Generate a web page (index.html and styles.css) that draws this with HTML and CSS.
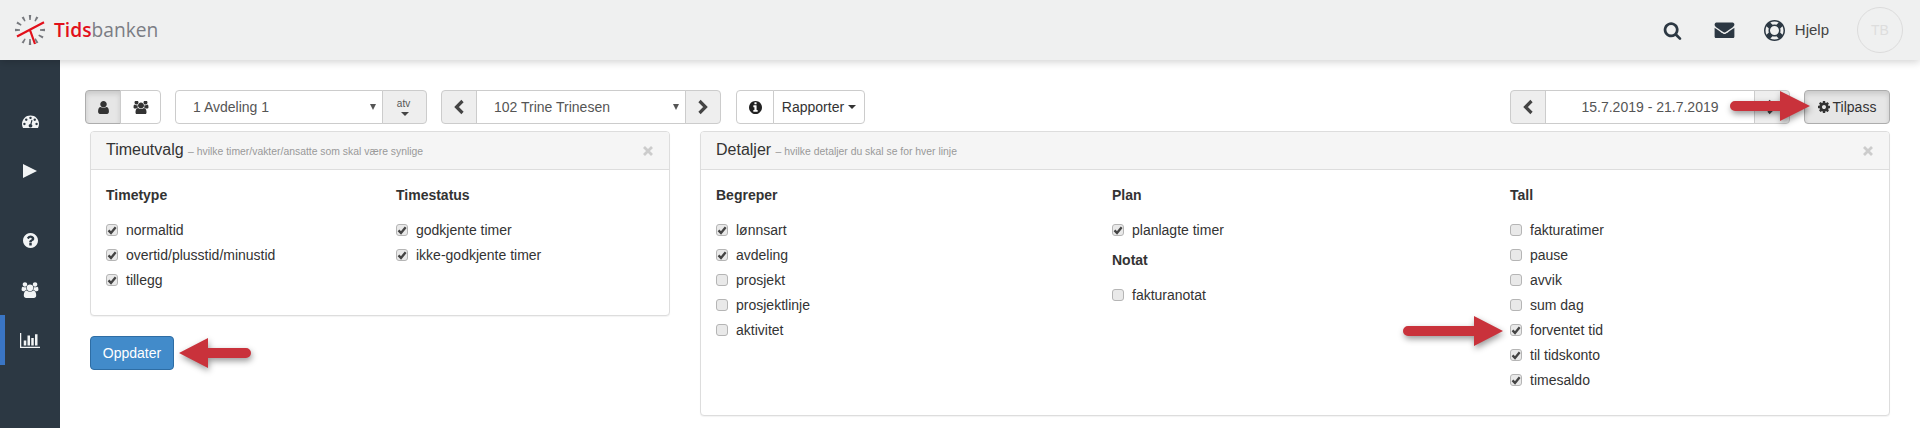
FILE: index.html
```html
<!DOCTYPE html>
<html lang="no">
<head>
<meta charset="utf-8">
<title>Tidsbanken</title>
<link rel="stylesheet" href="styles.css">
</head>
<body>
<svg class="sprite" width="0" height="0">
  <symbol id="i-search" viewBox="0 0 1792 1792"><path d="M1216 832q0-185-131.500-316.500t-316.500-131.500-316.500 131.500-131.500 316.500 131.500 316.500 316.500 131.500 316.500-131.500 131.500-316.500zm512 832q0 52-38 90t-90 38q-54 0-90-38l-343-342q-179 124-399 124-143 0-273.500-55.500t-225-150-150-225-55.500-273.500 55.500-273.500 150-225 225-150 273.500-55.500 273.500 55.500 225 150 150 225 55.500 273.500q0 220-124 399l343 343q37 37 37 90z"/></symbol>
  <symbol id="i-mail" viewBox="0 200 1792 1450"><path d="M1792 710v794q0 66-47 113t-113 47h-1472q-66 0-113-47t-47-113v-794q44 49 101 87 362 246 497 345 57 42 92.500 65.500t94.500 48 110 24.500h2q51 0 110-24.500t94.500-48 92.500-65.500q170-123 498-345 57-39 100-87zm0-294q0 79-49 151t-122 123q-376 261-468 325-10 7-42.500 30.500t-54 38-52 32.500-57.500 27-50 9h-2q-23 0-50-9t-57.500-27-52-32.500-54-38-42.500-30.500q-91-64-262-182.500t-205-142.500q-62-42-117-115.500t-55-136.500q0-78 41.500-130t118.500-52h1472q65 0 112.500 47t47.500 113z"/></symbol>
  <symbol id="i-ring" viewBox="0 0 1792 1792"><path d="M896 0q182 0 348 71t286 191 191 286 71 348-71 348-191 286-286 191-348 71-348-71-286-191-191-286-71-348 71-348 191-286 286-191 348-71zm0 128q-190 0-361 90l194 194q82-28 167-28t167 28l194-194q-171-90-361-90zm-678 1129l194-194q-28-82-28-167t28-167l-194-194q-90 171-90 361t90 361zm678 407q190 0 361-90l-194-194q-82 28-167 28t-167-28l-194 194q171 90 361 90zm0-384q159 0 271.500-112.500t112.500-271.500-112.500-271.500-271.500-112.500-271.500 112.500-112.500 271.500 112.500 271.500 271.500 112.500zm484-217l194 194q90-171 90-361t-90-361l-194 194q28 82 28 167t-28 167z"/></symbol>
  <symbol id="i-question" viewBox="128 128 1536 1536"><path d="M1024 1376v-192q0-14-9-23t-23-9h-192q-14 0-23 9t-9 23v192q0 14 9 23t23 9h192q14 0 23-9t9-23zm256-672q0-88-55.500-163t-138.500-116-170-41q-243 0-371 213-15 24 8 42l132 100q7 6 19 6 16 0 25-12 53-68 86-92 34-24 86-24 48 0 85.500 26t37.500 59q0 38-20 61t-68 45q-63 28-115.500 86.500t-52.500 125.500v36q0 14 9 23t23 9h192q14 0 23-9t9-23q0-19 21.500-49.500t54.500-49.500q32-18 49-28.500t46-35 44.500-48 28-60.500 12.500-81zm384 192q0 209-103 385.500t-279.500 279.500-385.500 103-385.500-103-279.500-279.500-103-385.500 103-385.500 279.500-279.500 385.500-103 385.500 103 279.500 279.500 103 385.500z"/></symbol>
  <symbol id="i-info" viewBox="128 128 1536 1536"><path d="M1152 1376v-160q0-14-9-23t-23-9h-96v-512q0-14-9-23t-23-9h-320q-14 0-23 9t-9 23v160q0 14 9 23t23 9h96v320h-96q-14 0-23 9t-9 23v160q0 14 9 23t23 9h448q14 0 23-9t9-23zm-128-896v-160q0-14-9-23t-23-9h-192q-14 0-23 9t-9 23v160q0 14 9 23t23 9h192q14 0 23-9t9-23zm640 416q0 209-103 385.500t-279.500 279.500-385.500 103-385.500-103-279.500-279.500-103-385.500 103-385.500 279.500-279.500 385.500-103 385.500 103 279.500 279.500 103 385.500z"/></symbol>
  <symbol id="i-cog" viewBox="128 128 1536 1536"><path d="M1152 896q0-106-75-181t-181-75-181 75-75 181 75 181 181 75 181-75 75-181zm512-109v222q0 12-8 23t-20 13l-185 28q-19 54-39 91 35 50 107 138 10 12 10 25t-9 23q-27 37-99 108t-94 71q-12 0-26-9l-138-108q-44 23-91 38-16 136-29 186-7 28-36 28h-222q-14 0-24.500-8.500t-11.500-21.500l-28-184q-49-16-90-37l-141 107q-10 9-25 9-14 0-25-11-126-114-165-168-7-10-7-23 0-12 8-23 15-21 51-66.500t54-70.500q-27-50-41-99l-183-27q-13-2-21-12.500t-8-23.500v-222q0-12 8-23t19-13l186-28q14-46 39-92-40-57-107-138-10-12-10-24 0-10 9-23 26-36 98.500-107.500t94.500-71.500q13 0 26 10l138 107q44-23 91-38 16-136 29-186 7-28 36-28h222q14 0 24.500 8.500t11.500 21.500l28 184q49 16 90 37l142-107q9-9 24-9 13 0 25 10 129 119 165 170 7 8 7 22 0 12-8 23-15 21-51 66.500t-54 70.500q26 50 41 98l183 28q13 2 21 12.500t8 23.500z"/></symbol>
  <symbol id="i-users" viewBox="-128 128 2048 1536"><path d="M529 896q-162 5-265 128h-134q-82 0-138-40.500t-56-118.500q0-353 124-353 6 0 43.500 21t97.500 42.500 119 21.500q67 0 133-23-5 37-5 66 0 139 81 256zm1071 637q0 120-73 189.500t-194 69.500h-874q-121 0-194-69.500t-73-189.500q0-53 3.500-103.500t14-109 26.500-108.500 43-97.500 62-81 85.500-53.500 111.500-20q10 0 43 21.500t73 48 107 48 135 21.500 135-21.500 107-48 73-48 43-21.500q61 0 111.500 20t85.500 53.500 62 81 43 97.500 26.500 108.500 14 109 3.500 103.500zm-1024-1277q0 106-75 181t-181 75-181-75-75-181 75-181 181-75 181 75 75 181zm704 384q0 159-112.500 271.500t-271.500 112.500-271.500-112.500-112.500-271.500 112.500-271.500 271.500-112.500 271.500 112.500 112.500 271.500zm576 225q0 78-56 118.500t-138 40.500h-134q-103-123-265-128 81-117 81-256 0-29-5-66 66 23 133 23 59 0 119-21.500t97.500-42.500 43.500-21q124 0 124 353zm-128-609q0 106-75 181t-181 75-181-75-75-181 75-181 181-75 181 75 75 181z"/></symbol>
  <symbol id="i-user" viewBox="128 128 1280 1536"><path d="M1536 1399q0 109-62.500 187t-150.500 78h-854q-88 0-150.500-78t-62.500-187q0-85 8.500-160.500t31.500-152 58.500-131 94-89 134.500-34.500q131 128 313 128t313-128q76 0 134.500 34.500t94 89 58.500 131 31.500 152 8.500 160.500zm-256-887q0 159-112.500 271.500t-271.500 112.500-271.500-112.500-112.500-271.500 112.500-271.500 271.500-112.500 271.500 112.500 112.500 271.500z" transform="translate(-128 0)"/></symbol>
  <symbol id="i-gauge" viewBox="0 256 1792 1280"><path d="M384 1152q0-53-37.500-90.500t-90.500-37.500-90.500 37.500-37.500 90.500 37.500 90.500 90.500 37.500 90.500-37.500 37.500-90.500zm192-448q0-53-37.500-90.500t-90.500-37.500-90.500 37.500-37.500 90.500 37.500 90.500 90.500 37.500 90.500-37.500 37.500-90.500zm428 481l101-382q6-26-7.500-48.500t-38.500-29.500-48 6.500-30 39.500l-101 382q-60 5-107 43.500t-63 98.500q-20 77 20 146t117 89 146-20 89-117q16-60-6-117t-72-91zm660-33q0-53-37.500-90.500t-90.500-37.500-90.500 37.500-37.500 90.500 37.500 90.500 90.500 37.500 90.500-37.500 37.500-90.500zm-640-640q0-53-37.500-90.500t-90.500-37.500-90.500 37.500-37.500 90.500 37.500 90.500 90.500 37.500 90.500-37.500 37.500-90.500zm448 192q0-53-37.500-90.500t-90.500-37.500-90.500 37.500-37.500 90.500 37.500 90.500 90.500 37.500 90.500-37.500 37.500-90.500zm320 448q0 261-141 483-19 29-54 29h-1402q-35 0-54-29-141-221-141-483 0-182 71-348t191-286 286-191 348-71 348 71 286 191 191 286 71 348z"/></symbol>
  <symbol id="i-chart" viewBox="0 128 2048 1536"><path d="M640 896v512h-256v-512h256zm384-512v1024h-256v-1024h256zm1024 1152v128h-2048v-1536h128v1408h1920zm-640-896v768h-256v-768h256zm384-384v1152h-256v-1152h256z"/></symbol>
  <symbol id="i-left" viewBox="0 0 12 16"><polyline points="9.500,2 3.500,8 9.500,14" fill="none" stroke="currentColor" stroke-width="3.200"/></symbol>
  <symbol id="i-right" viewBox="0 0 12 16"><polyline points="2.500,2 8.500,8 2.500,14" fill="none" stroke="currentColor" stroke-width="3.200"/></symbol>
  <symbol id="i-check" viewBox="0 0 12 12"><polyline points="1.800,6.500 4.800,9.500 10.400,2.800" fill="none" stroke="currentColor" stroke-width="2.800"/></symbol>
  <symbol id="i-times" viewBox="0 0 12 12"><path d="M2 2l8 8M10 2l-8 8" fill="none" stroke="currentColor" stroke-width="2.800"/></symbol>
</svg>

<header class="topbar">
  <a class="brand">
    <svg class="brand-mark" viewBox="0 0 60 60" width="60" height="60">
      <g fill="#77797e">
        <polygon points="28.800,15 31.200,15 30.700,20 29.300,20"/>
        <polygon points="36.200,16.500 38.400,17.500 35.600,21.500 34.400,20.900"/>
        <polygon points="23.800,16.500 21.600,17.500 24.400,21.500 25.600,20.900"/>
        <polygon points="17.500,21.600 16.400,23.600 20.900,25.700 21.600,24.500"/>
        <polygon points="15,28.800 15,31.200 20,30.700 20,29.300"/>
        <polygon points="45,28.800 45,31.200 40,30.700 40,29.300"/>
        <polygon points="43.500,36.400 42.500,38.400 38.300,35.700 39,34.500"/>
        <polygon points="21.600,42.500 23.600,43.500 25.700,39.100 24.500,38.400"/>
        <polygon points="28.800,45 31.200,45 30.700,39 29.300,39"/>
        <polygon points="36.400,43.500 38.400,42.500 35.700,38.300 34.500,39"/>
      </g>
      <path d="M17 36.500L44 22.300M29.800 29.500L35 44" fill="none" stroke="#e2101b" stroke-width="2.200"/>
    </svg>
    <span class="brand-text"><span class="brand-red">Tids</span>banken</span>
  </a>
  <nav class="topnav">
    <svg class="top-search"><use href="#i-search"/></svg>
    <svg class="top-mail"><use href="#i-mail"/></svg>
    <span class="top-help"><svg class="top-ring"><use href="#i-ring"/></svg>Hjelp</span>
    <span class="avatar">TB</span>
  </nav>
</header>

<div class="shell">
  <aside class="sidebar">
    <a class="side-item"><svg class="side-gauge"><use href="#i-gauge"/></svg></a>
    <a class="side-item"><span class="side-play"></span></a>
    <div class="side-gap"></div>
    <a class="side-item"><svg class="side-q"><use href="#i-question"/></svg></a>
    <a class="side-item"><svg class="side-users"><use href="#i-users"/></svg></a>
    <a class="side-item is-active"><svg class="side-chart"><use href="#i-chart"/></svg></a>
  </aside>

  <main class="content">
    <div class="toolbar">
      <div class="group group-view">
        <button class="btn btn-sq is-pressed"><svg class="ic-user"><use href="#i-user"/></svg></button>
        <button class="btn btn-users"><svg class="ic-users"><use href="#i-users"/></svg></button>
      </div>
      <div class="group group-dept">
        <div class="select select-dept"><span>1 Avdeling 1</span><i class="select-arrow"></i></div>
        <button class="btn btn-grey btn-atv"><span class="atv">atv</span><i class="caret-dark"></i></button>
      </div>
      <div class="group group-person">
        <button class="btn btn-grey btn-nav"><svg class="ic-chev"><use href="#i-left"/></svg></button>
        <div class="select select-person"><span>102 Trine Trinesen</span><i class="select-arrow"></i></div>
        <button class="btn btn-grey btn-nav"><svg class="ic-chev"><use href="#i-right"/></svg></button>
      </div>
      <div class="group group-report">
        <button class="btn btn-info"><svg class="ic-info"><use href="#i-info"/></svg></button>
        <button class="btn btn-report">Rapporter<i class="caret-small"></i></button>
      </div>
      <div class="toolbar-right">
        <div class="group">
          <button class="btn btn-grey btn-nav"><svg class="ic-chev"><use href="#i-left"/></svg></button>
          <div class="date-field">15.7.2019 - 21.7.2019</div>
          <button class="btn btn-grey btn-nav"><svg class="ic-chev"><use href="#i-right"/></svg></button>
        </div>
        <button class="btn btn-tilpass"><svg class="ic-cog"><use href="#i-cog"/></svg>Tilpass</button>
      </div>
    </div>

    <div class="panels">
      <div class="col-left">
        <section class="panel">
          <div class="panel-head">
            <h2>Timeutvalg <small>– hvilke timer/vakter/ansatte som skal være synlige</small></h2>
            <svg class="ic-close"><use href="#i-times"/></svg>
          </div>
          <div class="panel-body cols-left">
            <div>
              <h3>Timetype</h3>
              <label class="check"><span class="box"><svg><use href="#i-check"/></svg></span>normaltid</label>
              <label class="check"><span class="box"><svg><use href="#i-check"/></svg></span>overtid/plusstid/minustid</label>
              <label class="check"><span class="box"><svg><use href="#i-check"/></svg></span>tillegg</label>
            </div>
            <div>
              <h3>Timestatus</h3>
              <label class="check"><span class="box"><svg><use href="#i-check"/></svg></span>godkjente timer</label>
              <label class="check"><span class="box"><svg><use href="#i-check"/></svg></span>ikke-godkjente timer</label>
            </div>
          </div>
        </section>
        <button class="btn-primary">Oppdater</button>
      </div>

      <section class="panel panel-right">
        <div class="panel-head">
          <h2>Detaljer <small>– hvilke detaljer du skal se for hver linje</small></h2>
          <svg class="ic-close"><use href="#i-times"/></svg>
        </div>
        <div class="panel-body cols-right">
          <div>
            <h3>Begreper</h3>
            <label class="check"><span class="box"><svg><use href="#i-check"/></svg></span>lønnsart</label>
            <label class="check"><span class="box"><svg><use href="#i-check"/></svg></span>avdeling</label>
            <label class="check"><span class="box"></span>prosjekt</label>
            <label class="check"><span class="box"></span>prosjektlinje</label>
            <label class="check"><span class="box"></span>aktivitet</label>
          </div>
          <div>
            <h3>Plan</h3>
            <label class="check"><span class="box"><svg><use href="#i-check"/></svg></span>planlagte timer</label>
            <h3 class="h3-sub">Notat</h3>
            <label class="check"><span class="box"></span>fakturanotat</label>
          </div>
          <div>
            <h3>Tall</h3>
            <label class="check"><span class="box"></span>fakturatimer</label>
            <label class="check"><span class="box"></span>pause</label>
            <label class="check"><span class="box"></span>avvik</label>
            <label class="check"><span class="box"></span>sum dag</label>
            <label class="check"><span class="box"><svg><use href="#i-check"/></svg></span>forventet tid</label>
            <label class="check"><span class="box"><svg><use href="#i-check"/></svg></span>til tidskonto</label>
            <label class="check"><span class="box"><svg><use href="#i-check"/></svg></span>timesaldo</label>
          </div>
        </div>
      </section>
    </div>
  </main>
</div>

<svg class="arrow arrow-update" width="84" height="42" viewBox="0 0 84 42"><path d="M4 17L33 2V12H71A5 5 0 0 1 71 22H33V32Z"/></svg>
<svg class="arrow arrow-tilpass" width="92" height="42" viewBox="0 0 92 42"><path d="M84 17L54 2V12H9A5 5 0 0 0 9 22H54V32Z"/></svg>
<svg class="arrow arrow-forventet" width="112" height="42" viewBox="0 0 112 42"><path d="M104 17L75 2V12H9A5 5 0 0 0 9 22H75V32Z"/></svg>
</body>
</html>
```

FILE: styles.css
```css
* { box-sizing: border-box; }
html, body { margin: 0; height: 428px; overflow: hidden; }
body {
  position: relative;
  background: #fff;
  color: #333;
  font: 14px/20px "Liberation Sans", Arial, sans-serif;
}
.sprite { position: absolute; }
svg { display: block; fill: currentColor; }

/* top bar */
.topbar {
  position: relative;
  z-index: 2;
  height: 60px;
  display: flex;
  align-items: center;
  justify-content: space-between;
  background: #eff0f0;
  box-shadow: 0 2px 8px rgba(0, 0, 0, .18);
}
.brand { display: flex; align-items: center; }
.brand-mark { margin-right: -6px; }
.brand-text {
  font: 400 19.200px/24px "Open Sans", sans-serif;
  color: #7b7d84;
}
.brand-red { color: #e2101b; font-weight: 600; }
.topnav { display: flex; align-items: center; color: #2c3843; padding-right: 17px; }
.top-search { width: 19px; height: 19px; margin-right: 32px; }
.top-mail { width: 21px; height: 16px; margin-right: 29px; }
.top-help { display: flex; align-items: center; color: #444; margin-right: 28px; font-size: 15px; }
.top-ring { width: 21px; height: 21px; margin-right: 10px; color: #2c3843; }
.avatar {
  width: 46px;
  height: 46px;
  border-radius: 50%;
  border: 1px solid #dcdcdc;
  display: flex;
  align-items: center;
  justify-content: center;
  color: #ddd;
}

/* layout */
.shell { display: flex; height: 368px; }
.sidebar {
  width: 60px;
  flex: none;
  background: #2c3843;
  padding-top: 36px;
  color: #f2f4f5;
}
.side-item { height: 50px; display: flex; align-items: center; justify-content: center; }
.side-gap { height: 19px; }
.side-item.is-active { box-shadow: inset 5px 0 0 #3a75c4; }
.side-gauge { width: 17px; height: 13px; }
.side-play {
  width: 0;
  height: 0;
  border-left: 14px solid #f2f4f5;
  border-top: 7.500px solid transparent;
  border-bottom: 7.500px solid transparent;
}
.side-q { width: 15px; height: 15px; }
.side-users { width: 18px; height: 16px; }
.side-chart { width: 20px; height: 15px; }

.content { flex: 1; padding: 30px 30px 0 25px; min-width: 0; }

/* toolbar */
.toolbar { display: flex; height: 34px; }
.group { display: flex; margin-right: 14px; height: 34px; }
.group-person { margin-right: 15px; }
.group .btn, .group .select, .group .date-field { border-radius: 0; margin-left: -1px; }
.group > :first-child { border-radius: 4px 0 0 4px; margin-left: 0; }
.group > :last-child { border-radius: 0 4px 4px 0; }
.btn {
  height: 34px;
  padding: 0;
  border: 1px solid #ccc;
  border-radius: 4px;
  background: #fff;
  color: #333;
  font: inherit;
  display: flex;
  align-items: center;
  justify-content: center;
}
.btn-grey { background: #eee; color: #444; }
.btn-sq { width: 36px; }
.btn-users { width: 41px; }
.is-pressed { background: #e6e6e6; border-color: #adadad; box-shadow: inset 0 3px 5px rgba(0, 0, 0, .125); }
.ic-user { width: 11px; height: 13px; color: #333; }
.ic-users { width: 16px; height: 13px; color: #333; }
.select {
  border: 1px solid #ccc;
  background: #fff;
  color: #555;
  display: flex;
  align-items: center;
  justify-content: space-between;
}
.select-dept { width: 208px; padding: 0 6px 0 17px; }
.select-person { width: 210px; padding: 0 6px 0 17px; }
.select-arrow {
  border-left: 3.500px solid transparent;
  border-right: 3.500px solid transparent;
  border-top: 6px solid #555;
}
.btn-atv { width: 45px; flex-direction: column; color: #555; }
.atv { font-size: 10px; line-height: 10px; margin-right: 2px; }
.caret-dark {
  margin-top: 3px;
  border-left: 4px solid transparent;
  border-right: 4px solid transparent;
  border-top: 4px solid #444;
}
.btn-nav { width: 36px; }
.ic-chev { width: 12px; height: 16px; }
.btn-info { width: 38px; }
.ic-info { width: 13px; height: 13px; color: #222; }
.btn-report { width: 92px; }
.caret-small {
  margin-left: 4px;
  border-left: 4px solid transparent;
  border-right: 4px solid transparent;
  border-top: 4px solid #333;
}
.toolbar-right { margin-left: auto; display: flex; }
.date-field {
  width: 210px;
  border: 1px solid #ccc;
  background: #fff;
  color: #555;
  display: flex;
  align-items: center;
  justify-content: center;
}
.btn-tilpass {
  width: 86px;
  background: #e6e6e6;
  border-color: #adadad;
  box-shadow: inset 0 3px 5px rgba(0, 0, 0, .125);
}
.ic-cog { width: 12px; height: 12px; margin-right: 3px; }

/* panels */
.panels { display: flex; align-items: flex-start; margin: 7px 0 0 5px; gap: 30px; }
.col-left { width: 580px; flex: none; }
.panel { border: 1px solid #ddd; border-radius: 4px; background: #fff; box-shadow: 0 1px 1px rgba(0, 0, 0, .05); }
.panel-right { flex: 1; }
.panel-head {
  height: 38px;
  padding: 0 15px;
  background: #f5f5f5;
  border-bottom: 1px solid #ddd;
  border-radius: 3px 3px 0 0;
  display: flex;
  align-items: center;
  justify-content: space-between;
}
h2 { margin: 0; font-size: 16px; font-weight: 400; line-height: 18px; color: #333; }
h2 small { font-size: 10.400px; color: #999; }
.ic-close { width: 12px; height: 12px; color: #ccc; }
.panel-body { padding: 15px 15px 23px; display: grid; }
.cols-left { grid-template-columns: 290px 1fr; }
.cols-right { grid-template-columns: 396px 398px 1fr; }
h3 { margin: 0 0 12px; font-size: 14px; line-height: 20px; font-weight: 700; color: #333; }
.h3-sub { margin: 8px 0 12px; }
.check { display: flex; align-items: center; height: 25px; color: #333; }
.box {
  width: 12px;
  height: 12px;
  flex: none;
  margin-right: 8px;
  border: 1px solid #b5b5b5;
  border-radius: 3px;
  background: #e9e9e9;
  color: #444;
}
.box svg { width: 10px; height: 10px; }
.btn-primary {
  display: block;
  width: 84px;
  height: 34px;
  margin-top: 20px;
  padding: 0;
  border: 1px solid #2e6da4;
  border-radius: 4px;
  background: #428bca;
  color: #fff;
  font: inherit;
}

/* annotation arrows over the page */
.arrow {
  position: absolute;
  fill: #c9323b;
  filter: drop-shadow(1px 3px 3px rgba(0, 0, 0, .4));
  z-index: 3;
}
.arrow-update { left: 175px; top: 336px; }
.arrow-tilpass { left: 1726px; top: 89px; }
.arrow-forventet { left: 1399px; top: 314px; }
```
